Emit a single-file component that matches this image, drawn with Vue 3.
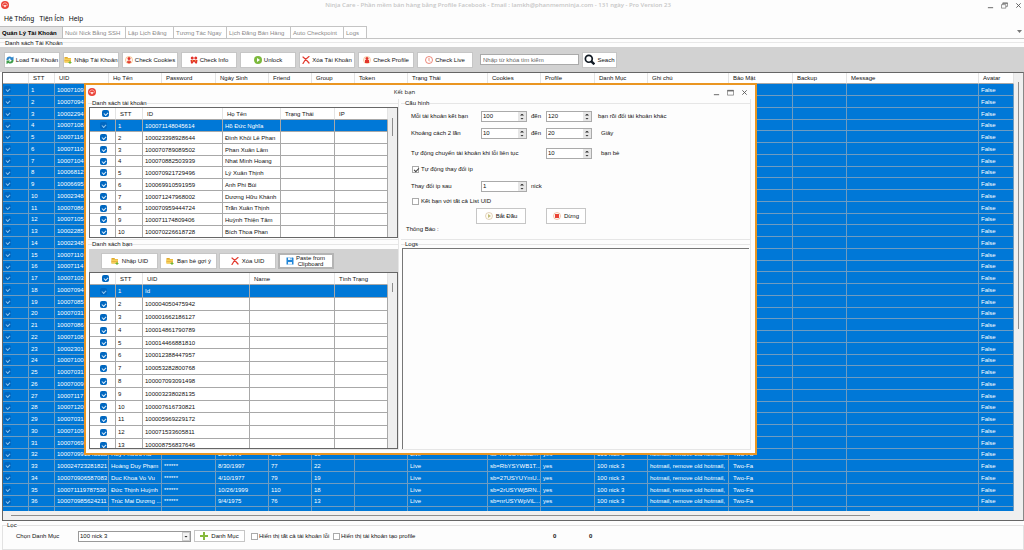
<script setup>
import { ref } from 'vue'

const tabs = [
  { t: 'Quản Lý Tài Khoản', w: 63 }, { t: 'Nuôi Nick Bằng SSH', w: 63 }, { t: 'Lập Lịch Đăng', w: 48 },
  { t: 'Tương Tác Ngay', w: 53 }, { t: 'Lịch Đăng Bán Hàng', w: 64 }, { t: 'Auto Checkpoint', w: 53 }, { t: 'Logs', w: 23 }
]
const tools = [
  { t: 'Load Tài Khoản', i: 'sync' }, { t: 'Nhập Tài Khoản', i: 'folder' }, { t: 'Check Cookies', i: 'person' },
  { t: 'Check Info', i: 'people' }, { t: 'Unlock', i: 'play' }, { t: 'Xóa Tài Khoản', i: 'cross' },
  { t: 'Check Profile', i: 'profile' }, { t: 'Check Live', i: 'clock' }
]
const cols = [
  ['', 26], ['STT', 26], ['UID', 54], ['Họ Tên', 53], ['Password', 54], ['Ngày Sinh', 53], ['Friend', 43], ['Group', 43],
  ['Token', 53], ['Trạng Thái', 80], ['Cookies', 53], ['Profile', 54], ['Danh Mục', 53], ['Ghi chú', 81], ['Bảo Mật', 64],
  ['Backup', 54], ['Message', 0], ['Avatar', 35]
]
const uids = ['10007109', '10007094', '10002294', '10007108', '10007116', '10007110', '10007104', '10006812', '10006695',
  '10002348', '10007086', '10007105', '10002285', '10002348', '10007110', '10007114', '10007103', '10007094', '10007085',
  '10007031', '10007086', '10007108', '10002301', '10007100', '10007031', '10007009', '10007117', '10007120', '10007031',
  '10007109', '10007069']
const full = (uid, name, dob, fr, gr, ck) => [uid, name, '******', dob, fr, gr, '', 'Live', ck, 'yes', '100 nick 3',
  'hotmail, remove old hotmail,', 'Two-Fa', '', '', 'False']
const rows = [
  ...uids.map(u => [u, '', '', '', '', '', '', '', '', '', '', '', '', '', '', 'False']),
  full('100070991548388', 'Huy Phước Hà', '2/2/1976', '102', '10', 'sb=H7USYa3sB...'),
  full('100024723281821', 'Hoàng Duy Phạm', '8/30/1997', '77', '22', 'sb=RbYSYWB1T...'),
  full('100070906587083', 'Duc Khoa Vo Vu', '4/10/1977', '79', '19', 'sb=27USYUYmU...'),
  full('100071119787530', 'Đức Thịnh Huỳnh', '10/26/1999', '110', '18', 'sb=2rUSYWj5RN...'),
  full('100070985624211', 'Trúc Mai Dương ...', '9/4/1975', '76', '13', 'sb=nrUSYWpViL...'),
  ['', '', '', '', '', '', '', '', '', '', '', '', '', '', '', '']
]
const accounts = [
  ['100071148045614', 'Hồ Đức Nghĩa'], ['100023398928644', 'Đình Khôi Lê Phan'], ['100070789089502', 'Phan Xuân Lâm'],
  ['100070882503939', 'Nhat Minh Hoang'], ['100070921729496', 'Lý Xuân Thịnh'], ['100069910591959', 'Anh Phi Bùi'],
  ['100071247968002', 'Dương Hữu Khánh'], ['100070959444724', 'Trần Xuân Thịnh'], ['100071174809406', 'Huỳnh Thiện Tâm'],
  ['100070226618728', 'Bích Thoa Phan'], ['', '']
]
const friends = ['Id', '100004050475942', '100001662186127', '100014861790789', '100014466881810', '100012388447957',
  '100053282800768', '100007093091498', '100003238028135', '100007616730821', '100005969229172', '100071533605811',
  '100008756837646']
const rotateIp = ref(true)
const allUid = ref(false)
</script>

<template>
  <svg class="defs" aria-hidden="true">
    <symbol id="sync" viewBox="0 0 16 16">
      <path d="M1 8C0 2 7 -1 12 3l3-2v7H8l2-2C7 4 5 5 5 8z" fill="#2f86c9" /><path d="M15 8c1 6-6 9-10 6l-4 2V9h7l-2 2c3 1 5 0 5-3z" fill="#3f9d4a" />
    </symbol>
    <symbol id="folder" viewBox="0 0 16 16">
      <path d="M1 2h6l1 2h6v9H1z" fill="#e0a92e" /><path d="M1 5h13v8H1z" fill="#f7d15a" /><path d="M1 9h13v1H1z" fill="#d9982a" />
      <path d="M11 10h2v2h2v2h-2v2h-2v-2H9v-2h2z" fill="#6fb536" />
    </symbol>
    <symbol id="person" viewBox="0 0 16 16">
      <circle cx="8" cy="8" r="7" fill="#fff" stroke="#f08a24" /><circle cx="8" cy="5" r="3" fill="#e2342c" />
      <path d="M4 13c0-6 8-6 8 0l-4 2z" fill="#e2342c" /><path d="M7 8h2l-1 5z" fill="#ffd39a" />
    </symbol>
    <symbol id="people" viewBox="0 0 16 16">
      <circle cx="4.500" cy="4" r="3" fill="#e2342c" /><circle cx="11.500" cy="4" r="3" fill="#e2342c" />
      <path d="M1 8h14l-1 7h-3l-3-4-3 4H2z" fill="#e2342c" /><path d="M4 8l1 4 1-4zM10 8l1 4 1-4z" fill="#f7b63c" />
    </symbol>
    <symbol id="play" viewBox="0 0 16 16"><circle cx="8" cy="8" r="8" fill="#7cb93c" /><path d="M6 4l6 4-6 4z" fill="#fff" /></symbol>
    <symbol id="cross" viewBox="0 0 16 16"><path d="M2 2c4 3 8 7 12 12M14 1C9 4 5 9 2 15" fill="none" stroke="#e23a2e" stroke-width="2.500" stroke-linecap="round" /></symbol>
    <symbol id="profile" viewBox="0 0 16 16">
      <circle cx="8" cy="8" r="7" fill="#fff3e6" stroke="#f0a060" /><circle cx="8" cy="5" r="3" fill="#e2342c" /><path d="M4 8h8v6H4z" fill="#e2342c" />
    </symbol>
    <symbol id="clock" viewBox="0 0 16 16"><circle cx="8" cy="8" r="7" fill="#fff" stroke="#e6604f" stroke-width="1.500" /><path d="M8 4v5l2 2" fill="none" stroke="#e6604f" stroke-width="1.500" /></symbol>
    <symbol id="search" viewBox="0 0 16 16"><circle cx="7" cy="7" r="5" fill="none" stroke="#111a24" stroke-width="2.500" /><path d="M10 10l5 5" stroke="#111a24" stroke-width="3.500" /></symbol>
    <symbol id="plus" viewBox="0 0 16 16"><path d="M6 0h4v6h6v4h-6v6H6v-6H0V6h6z" fill="#86b93d" /></symbol>
    <symbol id="save" viewBox="0 0 16 16"><path d="M1 1h13l1 1v13H1z" fill="#2186d8" /><path d="M4 1h8v5H4zM4 10h8v5H4z" fill="#e9f4fd" /><path d="M9 2h2v3H9z" fill="#2186d8" /></symbol>
    <symbol id="start" viewBox="0 0 16 16"><circle cx="8" cy="8" r="7" fill="#fffdf6" stroke="#c9a97c" /><path d="M6 4l6 4-6 4z" fill="#c4bd7c" /></symbol>
    <symbol id="stop" viewBox="0 0 16 16"><circle cx="8" cy="8" r="7" fill="#fff" stroke="#e08a54" /><path d="M4 4h8v8H4z" fill="#ea4436" /></symbol>
    <symbol id="logo" viewBox="0 0 16 16">
      <circle cx="8" cy="8" r="8" fill="#ea4339" /><path d="M3 9c0-7 10-7 10 0" fill="none" stroke="#ffc9c4" stroke-width="1.500" />
      <path d="M5 8h6v2l-3 3-3-3z" fill="#ffdcd8" />
    </symbol>
    <symbol id="min" viewBox="0 0 16 16"><path d="M2 13h12" stroke="#555" stroke-width="2" /></symbol>
    <symbol id="max" viewBox="0 0 16 16"><path d="M1 3h14v11H1z" fill="none" stroke="#666" stroke-width="1.500" /><path d="M1 4h14" stroke="#666" stroke-width="3" /></symbol>
    <symbol id="restore" viewBox="0 0 16 16"><path d="M1 6h10v8H1zM4 6V2h11v8h-4" fill="none" stroke="#666" stroke-width="1.500" /><path d="M4 3h11" stroke="#666" stroke-width="2" /></symbol>
    <symbol id="close" viewBox="0 0 16 16"><path d="M3 3l10 10M13 3L3 13" stroke="#555" stroke-width="2" /></symbol>
  </svg>

  <main class="app">
    <header class="titlebar">
      <svg class="logo"><use href="#logo" /></svg>
      <h1>Ninja Care - Phần mềm bán hàng bằng Profile Facebook - Email : lamkh@phanmemninja.com - 131 ngày - Pro Version 23</h1>
      <div class="winbtns">
        <button v-for="b in ['min', 'restore', 'close']" :key="b" :aria-label="b"><svg><use :href="'#' + b" /></svg></button>
      </div>
    </header>

    <nav class="menu"><a href="#">Hệ Thống</a><a href="#">Tiện Ích</a><a href="#">Help</a></nav>

    <div class="tabs" role="tablist">
      <button v-for="(t, i) in tabs" :key="t.t" role="tab" :class="{ active: i === 0 }" :style="{ width: t.w + 'px' }">{{ t.t }}</button>
      <span class="tabmenu"></span>
    </div>

    <div class="caption"><span>Danh sách Tài Khoản</span></div>

    <div class="toolbar">
      <button v-for="b in tools" :key="b.t" class="btn"><svg><use :href="'#' + b.i" /></svg>{{ b.t }}</button>
      <input class="search" type="text" placeholder="Nhập từ khóa tìm kiếm" aria-label="Nhập từ khóa tìm kiếm">
      <button class="btn seach"><svg><use href="#search" /></svg>Seach</button>
    </div>

    <section class="main-grid">
      <div class="viewport">
        <table class="grid big">
          <colgroup><col v-for="c in cols" :key="c[0]" :style="c[1] ? { width: c[1] + 'px' } : {}"></colgroup>
          <thead><tr><th v-for="c in cols" :key="c[0]">{{ c[0] }}</th></tr></thead>
          <tbody>
            <tr v-for="(r, i) in rows" :key="i">
              <td><input v-if="r[0]" type="checkbox" class="tick" checked :aria-label="'Tài khoản ' + (i + 1)"></td>
              <td>{{ r[0] ? i + 1 : '' }}</td>
              <td v-for="(v, j) in r" :key="j">{{ v }}</td>
            </tr>
          </tbody>
        </table>
      </div>
      <div class="vbar"><i></i></div>
      <div class="hbar"><i></i></div>
    </section>

    <fieldset class="filter">
      <legend>Lọc</legend>
      <label class="cat" for="cat">Chọn Danh Mục</label>
      <span class="selwrap"><select id="cat"><option>100 nick 3</option></select><i></i></span>
      <button class="btn add"><svg><use href="#plus" /></svg>Danh Mục</button>
      <label class="chk"><input type="checkbox">Hiển thị tất cả tài khoản lỗi</label>
      <label class="chk"><input type="checkbox">Hiển thị tài khoản tạo profile</label>
      <b class="count">0</b><b>0</b>
    </fieldset>

    <section class="dialog" role="dialog" aria-labelledby="dlg-title">
      <header class="dlg-title">
        <svg class="logo"><use href="#logo" /></svg>
        <h2 id="dlg-title">Kết bạn</h2>
        <div class="winbtns">
          <button v-for="b in ['min', 'max', 'close']" :key="b" :aria-label="b"><svg><use :href="'#' + b" /></svg></button>
        </div>
      </header>
      <div class="dlg-body">
        <div class="group">
          <h3>Danh sách tài khoản</h3>
          <div class="frame accounts">
            <div class="viewport">
              <table class="grid small">
                <colgroup><col class="c26"><col class="c27"><col class="c80"><col class="c58"><col class="c54"><col></colgroup>
                <thead><tr>
                  <th><input type="checkbox" class="tick" checked aria-label="Chọn tất cả tài khoản"></th>
                  <th>STT</th><th>ID</th><th>Họ Tên</th><th>Trạng Thái</th><th>IP</th>
                </tr></thead>
                <tbody>
                  <tr v-for="(a, i) in accounts" :key="i" :class="{ sel: i === 0 }">
                    <td><input v-if="a[0]" type="checkbox" class="tick" checked :aria-label="'Chọn ' + a[1]"></td>
                    <td>{{ a[0] ? i + 1 : '' }}</td><td>{{ a[0] }}</td><td>{{ a[1] }}</td><td></td><td></td>
                  </tr>
                </tbody>
              </table>
            </div>
            <div class="vbar"><i></i></div>
          </div>
        </div>

        <div class="group config">
          <h3>Cấu hình</h3>
          <div class="row">
            <label for="n1">Mỗi tài khoản kết bạn</label>
            <span class="spin"><input id="n1" type="text" value="100"><button aria-label="Đổi số"></button></span>
            <span class="mid">đến</span>
            <span class="spin"><input type="text" value="120" aria-label="đến"><button aria-label="Đổi số"></button></span>
            <span class="unit">bạn rồi đổi tài khoản khác</span>
          </div>
          <div class="row">
            <label for="n2">Khoảng cách 2 lần</label>
            <span class="spin"><input id="n2" type="text" value="10"><button aria-label="Đổi số"></button></span>
            <span class="mid">đến</span>
            <span class="spin"><input type="text" value="20" aria-label="đến"><button aria-label="Đổi số"></button></span>
            <span class="unit far">Giây</span>
          </div>
          <div class="row gap">
            <label class="wide" for="n3">Tự động chuyển tài khoản khi lỗi liên tục</label>
            <span class="spin"><input id="n3" type="text" value="10"><button aria-label="Đổi số"></button></span>
            <span class="unit far">bạn bè</span>
          </div>
          <label class="chk line"><input v-model="rotateIp" type="checkbox">Tự động thay đổi ip</label>
          <div class="row">
            <label for="n4">Thay đổi ip sau</label>
            <span class="spin"><input id="n4" type="text" value="1"><button aria-label="Đổi số"></button></span>
            <span class="mid">nick</span>
          </div>
          <label class="chk line short"><input v-model="allUid" type="checkbox">Kết bạn với tất cả List UID</label>
          <div class="actions">
            <button class="btn"><svg><use href="#start" /></svg>Bắt Đầu</button>
            <button class="btn stop"><svg><use href="#stop" /></svg>Dừng</button>
          </div>
          <p>Thông Báo :</p>
        </div>

        <div class="group">
          <h3>Danh sách bạn</h3>
          <div class="subbar">
            <button class="btn"><svg><use href="#folder" /></svg>Nhập UID</button>
            <button class="btn"><svg><use href="#folder" /></svg>Bạn bè gợi ý</button>
            <button class="btn"><svg><use href="#cross" /></svg>Xóa UID</button>
            <button class="btn paste"><svg><use href="#save" /></svg><span>Paste from Clipboard</span></button>
          </div>
          <div class="frame">
            <div class="viewport">
              <table class="grid small tall">
                <colgroup><col class="c26"><col class="c27"><col class="c107"><col class="c85"><col></colgroup>
                <thead><tr>
                  <th><input type="checkbox" class="tick" checked aria-label="Chọn tất cả bạn"></th>
                  <th>STT</th><th>UID</th><th>Name</th><th>Tình Trạng</th>
                </tr></thead>
                <tbody>
                  <tr v-for="(f, i) in friends" :key="f" :class="{ sel: i === 0 }">
                    <td><input type="checkbox" class="tick" checked :aria-label="'Chọn ' + f"></td>
                    <td>{{ i + 1 }}</td><td>{{ f }}</td><td></td><td></td>
                  </tr>
                </tbody>
              </table>
            </div>
            <div class="vbar short"><i></i></div>
          </div>
        </div>

        <div class="group logs">
          <h3>Logs</h3>
          <textarea aria-label="Logs"></textarea>
        </div>
      </div>
    </section>
  </main>
</template>

<style>
html, body { margin: 0; background: #fdfdfd; }
</style>

<style scoped>
* { box-sizing: border-box; }
.defs { position: absolute; width: 0; height: 0; }
.app { position: relative; display: flex; flex-direction: column; height: 100vh; overflow: hidden; color: #111; background: #fdfdfd; }
.app, button, input, select, textarea { font-family: "Liberation Sans", Arial, sans-serif; font-size: 6px; line-height: 8px; }
button, input, select { margin: 0; padding: 0; color: inherit; }
h1, h2, h3, p { margin: 0; font-size: 6px; font-weight: normal; }

.titlebar { display: flex; align-items: center; height: 13px; flex: none; padding: 0 0 3px 1px; }
.logo { width: 8px; height: 8px; flex: none; }
.titlebar h1 { flex: 1; text-align: center; font-family: "Open Sans", sans-serif; font-weight: 600; color: #c6c6c6; white-space: nowrap; }
.winbtns { display: flex; gap: 7px; }
.winbtns button { width: 7px; height: 7px; border: 0; background: none; display: flex; }
.winbtns svg { width: 7px; height: 7px; }
.titlebar .winbtns { padding-right: 2px; }
.menu { display: flex; gap: 5px; height: 12px; flex: none; padding: 1px 4px 0; }
.menu a { color: #111; text-decoration: none; font-family: Roboto, sans-serif; font-size: 7px; line-height: 11px; }

.tabs { display: flex; height: 13px; flex: none; border-bottom: 1px solid #c4c4c4; margin-top: 1px; }
.tabs button { border: 1px solid #c4c4c4; border-width: 1px 1px 0 0; background: #fff; color: #8a8a8a; text-align: left; padding-left: 2px; white-space: nowrap; overflow: hidden; }
.tabs button.active { font-weight: bold; color: #000; background: #e4e4e4; border-color: #bdbdbd; }
.tabmenu { margin: 4px 2px 0 auto; width: 5px; height: 3px; background: #777; clip-path: polygon(0 0, 100% 0, 50% 100%); }
.caption { flex: none; height: 8px; line-height: 8px; padding-left: 5px; background: linear-gradient(#e8e8e8, #e8e8e8) 0 3px / 100% 1px no-repeat; }
.caption span { background: #fdfdfd; display: inline-block; }

.toolbar { display: flex; align-items: center; gap: 3px; flex: none; height: 25px; background: #d2d2d2; padding-left: 4px; }
.btn { display: flex; align-items: center; justify-content: center; gap: 3px; width: 57px; height: 16px; background: #fff; border: 1px solid #c6c6c6; white-space: nowrap; }
.toolbar .btn { width: 56px; gap: 2px; }
.btn svg { width: 8px; height: 8px; flex: none; }
.search { width: 99px; height: 11px; margin-left: 4px; border: 1px solid #aaa; padding: 0 2px; }
.search::placeholder { color: #666; opacity: 1; }
.toolbar .seach { width: 35px; }
.toolbar .seach svg { width: 11px; height: 11px; }

.main-grid { flex: 1; min-height: 0; margin: 0 0 0 2px; border: 1px solid #666; border-right-color: #888; display: grid; grid-template: minmax(0, 1fr) 9px / minmax(0, 1fr) 9px; background: #efefef; }
.viewport { overflow: hidden; min-height: 0; background: #fff; }
.grid { width: 100%; table-layout: fixed; border-collapse: separate; border-spacing: 0; }
.grid th, .grid td { padding: 0 0 0 2px; height: inherit; line-height: 8px; text-align: left; font-weight: normal; white-space: nowrap; overflow: hidden; border: 0 solid #a8a8a8; border-width: 0 1px 1px 0; }
.grid th { border-right-color: #e4e4e4; padding-left: 4px; }
.grid tr { height: 12px; }
.grid thead tr { height: 11px; }
.grid tbody tr:nth-child(4n) { height: 11px; }
.tall tbody tr { height: 13px; }
.tall tbody tr:nth-child(4n) { height: 13px; }
.tall tbody tr:nth-child(5n) { height: 12px; }
.big tbody td, .sel td { background: #0078d7; color: #fff; }
.big tbody td { border-color: #6f9cc0; }
.big td:first-child { padding-left: 1px; }
.small td:first-child { padding-left: 10px; }
.small th:first-child { padding-left: 12px; }
.small thead tr { height: 12px; }
.tall thead tr { height: 12px; }
.big th:nth-child(15), .big td:nth-child(15) { padding-left: 4px; }
.c26 { width: 26px; } .c27 { width: 27px; } .c80 { width: 80px; } .c58 { width: 58px; } .c54 { width: 54px; } .c107 { width: 107px; } .c85 { width: 85px; }

.tick { appearance: none; display: block; position: relative; width: 7px; height: 7px; border-radius: 2px; background: #0067c0; }
.tick::after { content: ""; position: absolute; left: 2px; top: 2px; width: 3px; height: 2px; border: solid #d9ebfa; border-width: 0 0 1px 1px; transform: rotate(-45deg); }
.big .tick, .sel .tick { background: #0067c0; }
.big .tick::after, .sel .tick::after { border-color: #8fc4ee; }

.vbar i { display: block; width: 1px; height: 247px; margin: 9px auto 0; background: #8d8d8d; }
.hbar i { display: block; width: 85%; height: 1px; margin: 4px 0 0 8px; background: #8d8d8d; }

.filter { display: flex; align-items: center; flex: none; height: 29px; border: 1px solid #e2e2e2; margin: 0 0 0 2px; padding: 1px 0 0 13px; position: relative; }
.filter legend { padding: 0; margin-left: -9px; line-height: 8px; }
.cat { width: 62px; }
.selwrap { position: relative; width: 113px; height: 11px; display: flex; }
.selwrap select { appearance: none; width: 100%; border: 1px solid #999; background: #fff; padding: 0 1px; border-radius: 0; }
.selwrap i { position: absolute; right: 1px; top: 1px; width: 8px; height: 9px; border: 1px solid #ccc; background: #f2f2f2; pointer-events: none; }
.selwrap i::after { content: ""; position: absolute; left: 1px; top: 3px; width: 4px; height: 2px; background: #222; clip-path: polygon(0 0, 100% 0, 50% 100%); }
.filter .add { width: 51px; height: 12px; margin: 0 6px 0 3px; }
.chk { display: flex; align-items: center; gap: 1px; white-space: nowrap; }
.filter .chk { width: 82px; }
.chk input { appearance: none; width: 7px; height: 7px; border: 1px solid #aaa; background: #fff; position: relative; flex: none; }
.chk input:checked::after { content: ""; position: absolute; left: 1px; top: 1px; width: 4px; height: 2px; border: solid #444; border-width: 0 0 1px 1px; transform: rotate(-45deg); }
.count { margin-left: 138px; width: 36px; }

.dialog { position: absolute; left: 84px; top: 83px; width: 673px; height: 372px; background: #fdfdfd; border: 2px solid #ea9622; display: flex; flex-direction: column; padding: 0 2px 3px; }
.dlg-title { display: flex; align-items: center; height: 14px; flex: none; padding-right: 5px; }
.dlg-title h2 { flex: 1; text-align: center; font-family: "Open Sans", sans-serif; color: #222; }
.dlg-body { flex: 1; min-height: 0; display: grid; grid-template: 141px minmax(0, 1fr) / 313px minmax(0, 1fr); }
.group { display: flex; flex-direction: column; min-height: 0; margin-right: 2px; border: 1px solid #e6e6e6; border-width: 0 1px 1px 0; background: linear-gradient(#e6e6e6, #e6e6e6) 0 4px / 100% 1px no-repeat; padding-left: 1px; }
.group h3 { align-self: flex-start; flex: none; line-height: 8px; margin-left: 3px; background: #fdfdfd; }
.frame { flex: 1; min-height: 0; display: grid; grid-template-columns: minmax(0, 1fr) 9px; border: 1px solid #666; background: #efefef; }
.accounts { margin-bottom: 1px; }
.frame .vbar i { height: 18px; margin-top: 10px; }
.frame .vbar.short i { height: 9px; }
.subbar { display: flex; align-items: center; gap: 2px; height: 23px; flex: none; background: #d2d2d2; padding-left: 12px; margin-top: 1px; }
.subbar .btn { width: 57px; }
.subbar .paste { border: 2px solid #b4b4b4; width: 56px; gap: 1px; }
.paste span { width: 32px; white-space: normal; line-height: 6px; }

.config { position: relative; }
.row { display: flex; align-items: center; height: 16px; margin: 1px 0 0 9px; }
.config .gap { margin-top: 4px; }
.row label { width: 70px; white-space: nowrap; }
.row label.wide { width: 135px; }
.mid { width: 19px; padding-left: 4px; }
.unit { padding-left: 6px; }
.unit.far { padding-left: 9px; }
.spin { display: flex; width: 46px; height: 11px; border: 1px solid #aaa; background: #fff; }
.spin input { flex: 1; min-width: 0; border: 0; padding-left: 1px; background: none; }
.spin button { position: relative; width: 8px; border: 0; background: #e6e6e6; }
.spin button::before, .spin button::after { content: ""; position: absolute; left: 2px; width: 4px; height: 2px; background: #333; }
.spin button::before { top: 2px; clip-path: polygon(50% 0, 100% 100%, 0 100%); }
.spin button::after { bottom: 1px; clip-path: polygon(0 0, 100% 0, 50% 100%); }
.line { height: 16px; margin-left: 10px; gap: 2px; }
.line.short { height: 14px; }
.actions { display: flex; gap: 20px; margin-left: 74px; }
.actions .btn { width: 50px; }
.actions .stop { width: 40px; }
.config p { margin: 0 0 0 4px; line-height: 10px; }

.logs textarea { flex: 1; min-height: 0; margin-right: 1px; border: 1px solid #777; border-width: 1px 0 0 1px; background: #fdfdfd; resize: none; }
</style>
